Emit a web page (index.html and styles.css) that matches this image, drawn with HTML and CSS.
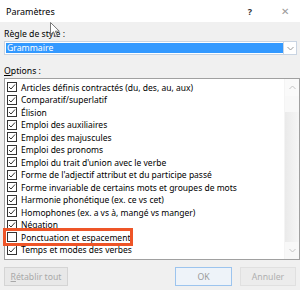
FILE: index.html
```html
<!DOCTYPE html>
<html lang="fr">
<head>
    <meta charset="UTF-8">
    <title>Paramètres</title>
    <link rel="stylesheet" href="styles.css">
</head>
<body>
    <div class="titlebar">
        <span class="title">Paramètres</span>
        <span class="help">?</span>
        <span class="close">&#x2715;</span>
    </div>

    <div class="main">
        <div class="label first">Règle de style :</div>
        <div class="select">
            <div class="select-value">Grammaire</div>
            <div class="select-btn">
                <svg width="7" height="5" viewBox="0 0 7 5"><polyline points="0.5,1 3.5,4 6.5,1" fill="none" stroke="#9a9a9a" stroke-width="1"/></svg>
            </div>
        </div>

        <div class="label options"><u>O</u>ptions :</div>
        <div class="listbox">
            <ul class="items">
                <li><span class="box checked"></span>Articles définis contractés (du, des, au, aux)</li>
                <li><span class="box checked"></span>Comparatif/superlatif</li>
                <li><span class="box checked"></span>Élision</li>
                <li><span class="box checked"></span>Emploi des auxiliaires</li>
                <li><span class="box checked"></span>Emploi des majuscules</li>
                <li><span class="box checked"></span>Emploi des pronoms</li>
                <li><span class="box checked"></span>Emploi du trait d'union avec le verbe</li>
                <li><span class="box checked"></span>Forme de l'adjectif attribut et du participe passé</li>
                <li><span class="box checked"></span>Forme invariable de certains mots et groupes de mots</li>
                <li><span class="box checked"></span>Harmonie phonétique (ex. ce vs cet)</li>
                <li><span class="box checked"></span>Homophones (ex. a vs à, mangé vs manger)</li>
                <li><span class="box checked"></span>Négation</li>
                <li><span class="box"></span>Ponctuation et espacement</li>
                <li><span class="box checked"></span>Temps et modes des verbes</li>
            </ul>
            <div class="scrollbar">
                <div class="arrow up">
                    <svg width="7" height="5" viewBox="0 0 7 5"><polyline points="0.5,4 3.5,1 6.5,4" fill="none" stroke="#c4c4c4" stroke-width="1"/></svg>
                </div>
                <div class="thumb"></div>
                <div class="track"></div>
                <div class="arrow down">
                    <svg width="7" height="5" viewBox="0 0 7 5"><polyline points="0.5,1 3.5,4 6.5,1" fill="none" stroke="#c4c4c4" stroke-width="1"/></svg>
                </div>
            </div>
        </div>

        <div class="buttons">
            <button class="btn reset" disabled><u>R</u>établir tout</button>
            <button class="btn ok">OK</button>
            <button class="btn cancel">Annuler</button>
        </div>
    </div>

    <!-- cadre rouge autour de l'option -->
    <div class="highlight"></div>

    <svg class="cursor" width="11" height="16" viewBox="0 0 11 16">
        <path d="M0.5,0.5 L0.5,12.5 L3.5,9.8 L5.6,14.6 L7.4,13.8 L5.4,9.2 L9.3,9.2 Z" fill="#fff" stroke="#6a6a6a" stroke-width="0.9"/>
    </svg>
</body>
</html>
```

FILE: styles.css
```css
body {
    margin: 0;
    width: 300px;
    height: 290px;
    overflow: hidden;
    position: relative;
    background-color: #f0f0f0;
    font-family: "Noto Sans", "Open Sans", sans-serif;
    font-size: 8.7px;
    color: #000;
}
.titlebar {
    height: 22px;
    background-color: #fff;
    display: flex;
    align-items: center;
    padding-left: 6px;
    font-size: 9px;
}
.title {
    flex: 1;
}
.help {
    width: 20px;
    text-align: center;
    font-weight: bold;
    color: #333;
}
.close {
    width: 30px;
    margin-left: 10px;
    text-align: center;
    color: #9a9a9a;
    font-size: 10px;
}
.main {
    padding-left: 4px;
}
.label {
    height: 12px;
    line-height: 12px;
}
.label.first {
    margin-top: 6px;
}
.label.options {
    margin-top: 10px;
}
.select {
    display: flex;
    height: 14px;
    width: 293px;
    margin-top: 1px;
    box-sizing: border-box;
    border: 1px solid #c9d4e2;
    background-color: #fff;
}
.select-value {
    flex: 1;
    margin: 1px 0 1px 1px;
    background-color: #3399ff;
    color: #fff;
    line-height: 10px;
    padding-left: 1px;
}
.select-btn {
    width: 12px;
    border-left: 1px solid #c9d4e2;
    display: flex;
    align-items: center;
    justify-content: center;
}
.listbox {
    display: flex;
    width: 296px;
    height: 182px;
    margin-top: 1px;
    box-sizing: border-box;
    border: 1px solid #a0a0a0;
    background-color: #fff;
}
.items {
    flex: 1;
    list-style: none;
    margin: 0;
    padding: 2px 0 0 0;
    font-size: 8.5px;
}
.items li {
    display: flex;
    align-items: center;
    height: 12.5px;
    white-space: nowrap;
}
.box {
    width: 10px;
    height: 10px;
    box-sizing: border-box;
    border: 1px solid #333;
    background-color: #fff;
    margin: 0 4px 0 2px;
    flex-shrink: 0;
}
.box.checked {
    background: #fff url("data:image/svg+xml,%3Csvg xmlns='http://www.w3.org/2000/svg' width='8' height='8' viewBox='0 0 8 8'%3E%3Cpolyline points='1,4 3,6 7,1.5' fill='none' stroke='%23333' stroke-width='1'/%3E%3C/svg%3E") no-repeat center;
}
.scrollbar {
    width: 14px;
    display: flex;
    flex-direction: column;
    border-left: 1px solid #f4f4f4;
}
.arrow {
    height: 17px;
    display: flex;
    align-items: center;
    justify-content: center;
}
.arrow.up {
    background-color: #fafafa;
}
.thumb {
    height: 16px;
    background-color: #f8f8f8;
}
.track {
    flex: 1;
    background: linear-gradient(to right, #eaeaea, #f6f6f6);
}
.arrow.down {
    background-color: #f8f8f8;
}
.buttons {
    display: flex;
    gap: 8px;
    margin-top: 7px;
    padding-right: 4px;
}
.btn {
    height: 19px;
    padding: 0;
    font-family: inherit;
    font-size: 8.7px;
    background-color: #e8e8e8;
    border: 1px solid #d4d4d4;
    color: #a8a8a8;
}
.btn.reset {
    width: 64px;
}
.btn.ok {
    width: 57px;
    margin-left: auto;
    border-color: #9cc4ee;
    background-color: #eef3f9;
    color: #9a9a9a;
}
.btn.cancel {
    width: 56px;
    background-color: #ececec;
    border-color: #e0e0e0;
    color: #b0b0b0;
}
.highlight {
    position: absolute;
    left: 3px;
    top: 228px;
    width: 130px;
    height: 18px;
    box-sizing: border-box;
    border: 3px solid #ee5528;
}
.cursor {
    position: absolute;
    left: 50px;
    top: 22px;
}
```
